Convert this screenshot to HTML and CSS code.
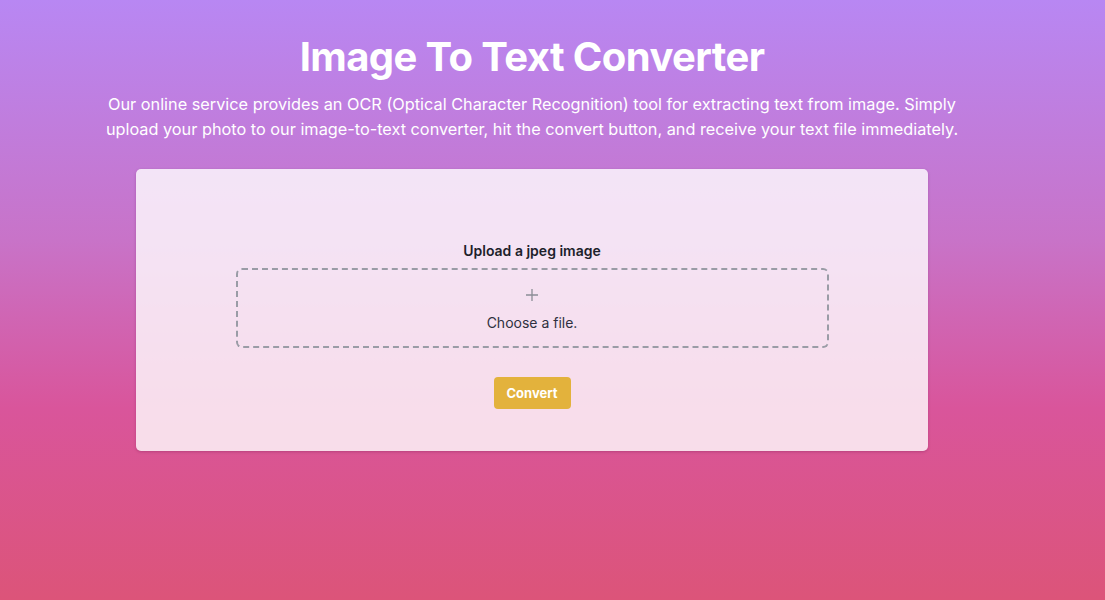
FILE: index.html
```html
<!DOCTYPE html>
<html lang="en">
<head>
<meta charset="utf-8">
<title>Image To Text Converter</title>
<link rel="stylesheet" href="styles.css">
</head>
<body>
<div class="page">
  <header class="hero">
    <h1 class="title">Image To Text Converter</h1>
    <p class="lead">Our online service provides an OCR (Optical Character Recognition) tool for extracting text from image. Simply upload your photo to our image-to-text converter, hit the convert button, and receive your text file immediately.</p>
  </header>
  <main class="card">
    <div class="form">
      <label class="label">Upload a jpeg image</label>
      <div class="dropzone">
        <svg class="plus" width="14" height="14" viewBox="0 0 14 14"><path d="M7 1v12M1 7h12" stroke="#8a8d96" stroke-width="1.3" fill="none"/></svg>
        <span class="choose">Choose a file.</span>
      </div>
      <button class="btn">Convert</button>
    </div>
  </main>
</div>
</body>
</html>
```
FILE: styles.css
```css
html, body {
  margin: 0;
  padding: 0;
  height: 100%;
}
body {
  background: linear-gradient(to bottom, #b887f3 0%, #c873c8 40%, #d9559b 68%, #dc5479 100%);
  font-family: Inter, "Liberation Sans", Arial, sans-serif;
  color: #fff;
}
.page {
  width: 1064px;
  display: flex;
  flex-direction: column;
  align-items: center;
}
.hero {
  display: flex;
  flex-direction: column;
  align-items: center;
  padding-top: 30px;
}
.title {
  margin: 0;
  font-size: 40px;
  line-height: 54px;
  font-weight: 700;
  letter-spacing: -0.6px;
}
.lead {
  margin: 8px 0 0;
  width: 870px;
  text-align: center;
  font-size: 16.3px;
  line-height: 25px;
  font-weight: 400;
}
.card {
  margin-top: 27px;
  width: 792px;
  height: 282px;
  box-sizing: border-box;
  background: rgba(255, 255, 255, 0.8);
  border-radius: 5px;
  box-shadow: 0 1px 3px rgba(80, 0, 60, 0.25);
  display: flex;
  justify-content: center;
  padding-top: 72px;
}
.form {
  width: 593px;
  display: flex;
  flex-direction: column;
  align-items: center;
}
.label {
  font-size: 14px;
  font-weight: 600;
  color: #1d1f2b;
  line-height: 20px;
}
.dropzone {
  margin-top: 7px;
  width: 593px;
  height: 80px;
  box-sizing: border-box;
  border: 2px dashed #9a9ca6;
  border-radius: 6px;
  display: flex;
  flex-direction: column;
  align-items: center;
  padding-top: 18px;
}
.plus {
  display: block;
}
.choose {
  margin-top: 12px;
  font-size: 14px;
  color: #2f3140;
  line-height: 18px;
}
.btn {
  margin-top: 29px;
  width: 77px;
  height: 32px;
  border: none;
  border-radius: 4px;
  background: #e3b23c;
  color: #fff;
  font-family: inherit;
  font-size: 13px;
  font-weight: 700;
  padding: 0;
}
```
